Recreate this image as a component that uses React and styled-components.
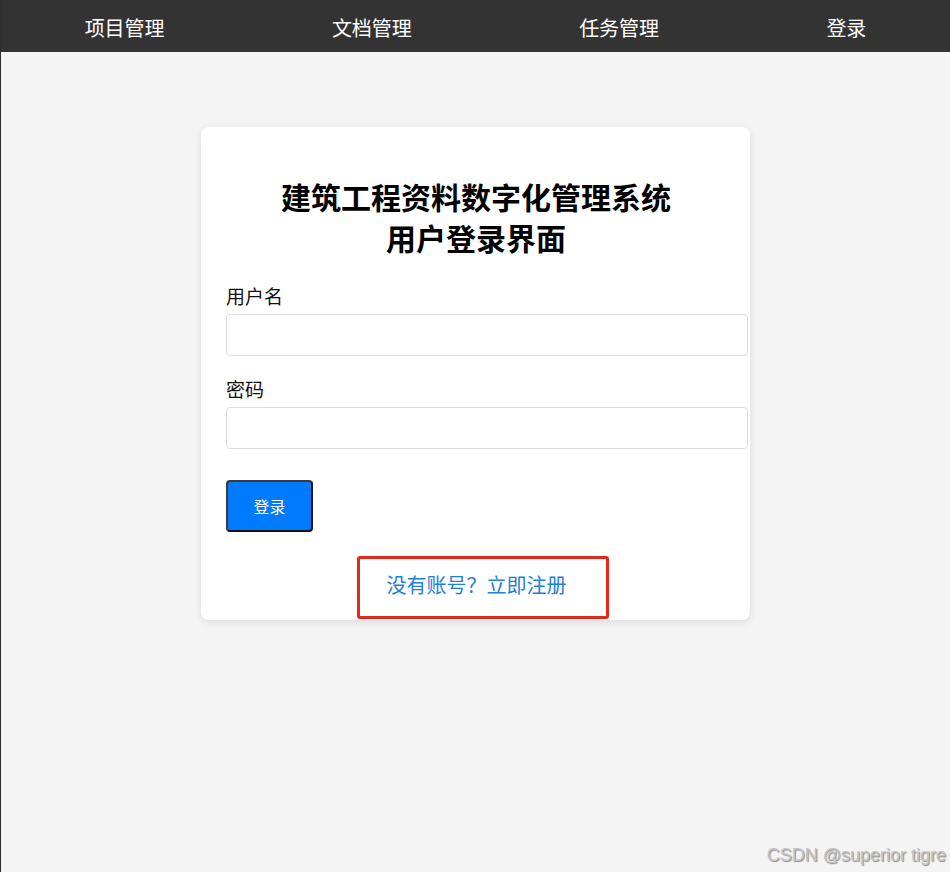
import React, { useState } from "react";
import styled, { createGlobalStyle } from "styled-components";

const GlobalStyle = createGlobalStyle`
  html, body {
    margin: 0;
    padding: 0;
    background: #f4f4f4;
    font-family: "Noto Sans CJK SC", "Noto Sans", sans-serif;
  }
`;

const Page = styled.div`
  position: relative;
  min-height: 872px;
  background: #f4f4f4;
  border-left: 1px solid #2e2e2e;
  overflow: hidden;
`;

const NavBar = styled.nav`
  height: 52px;
  box-sizing: border-box;
  padding-top: 4px;
  background: #333333;
  display: flex;
  justify-content: space-around;
  align-items: center;
`;

const NavLink = styled.a`
  color: #ffffff;
  font-size: 20px;
  line-height: 24px;
  text-decoration: none;
  cursor: pointer;
`;

const Main = styled.main`
  display: flex;
  justify-content: center;
  padding-top: 75px;
`;

const Card = styled.div`
  width: 500px;
  padding: 25px 24px 1px 25px;
  background: #ffffff;
  border-radius: 8px;
  box-shadow: 0 2px 8px rgba(0, 0, 0, 0.1);
`;

const Title = styled.h2`
  margin: 24px 0 25px;
  font-size: 30px;
  line-height: 41px;
  font-weight: 700;
  text-align: center;
  color: #000;
`;

const Field = styled.div`
  margin-bottom: ${p => p.gap || 0}px;
`;

const Label = styled.label`
  display: block;
  font-size: 19px;
  line-height: 26px;
  color: #111;
  margin-bottom: 5px;
`;

const Input = styled.input`
  width: 100%;
  height: 20px;
  padding: 10px;
  border: 1px solid #dddddd;
  border-radius: 4px;
  font-size: 16px;
  outline: none;
  background: #fff;
`;

const SubmitButton = styled.button`
  display: block;
  width: 87px;
  height: 52px;
  margin-top: 31px;
  padding: 0;
  background: #007bff;
  color: #ffffff;
  font-family: inherit;
  font-size: 16px;
  border: 2px solid #3a3a3a;
  border-right-color: #111;
  border-bottom-color: #111;
  border-radius: 4px;
  cursor: pointer;
`;

const LinkRow = styled.div`
  display: flex;
  justify-content: center;
  margin-top: 24px;
  padding-left: 13px;
`;

const Highlight = styled.div`
  display: flex;
  align-items: center;
  height: 57px;
  padding: 0 39px 0 27px;
  border: 3px solid #e3281c;
  border-radius: 3px;
`;

const RegisterLink = styled.a`
  color: #1f80d6;
  font-size: 20px;
  line-height: 24px;
  margin-top: -6px;
  text-decoration: none;
  cursor: pointer;
`;

const Watermark = styled.div`
  position: absolute;
  right: 4px;
  bottom: 6px;
  font-family: "Liberation Sans", Arial, sans-serif;
  font-size: 18px;
  color: #c4c4c4;
  text-shadow: 1px 1px 1px #8a8a8a;
`;

export default function App() {
  const [username, setUsername] = useState("");
  const [password, setPassword] = useState("");

  return (
    <Page>
      <GlobalStyle />
      <NavBar>
        <NavLink>项目管理</NavLink>
        <NavLink>文档管理</NavLink>
        <NavLink>任务管理</NavLink>
        <NavLink>登录</NavLink>
      </NavBar>
      <Main>
        <Card>
          <Title>
            建筑工程资料数字化管理系统
            <br />
            用户登录界面
          </Title>
          <form onSubmit={e => e.preventDefault()}>
            <Field gap={20}>
              <Label>用户名</Label>
              <Input
                type="text"
                value={username}
                onChange={e => setUsername(e.target.value)}
              />
            </Field>
            <Field>
              <Label>密码</Label>
              <Input
                type="password"
                value={password}
                onChange={e => setPassword(e.target.value)}
              />
            </Field>
            <SubmitButton type="submit">登录</SubmitButton>
          </form>
          <LinkRow>
            <Highlight>
              <RegisterLink>没有账号？立即注册</RegisterLink>
            </Highlight>
          </LinkRow>
        </Card>
      </Main>
      <Watermark>CSDN @superior tigre</Watermark>
    </Page>
  );
}
